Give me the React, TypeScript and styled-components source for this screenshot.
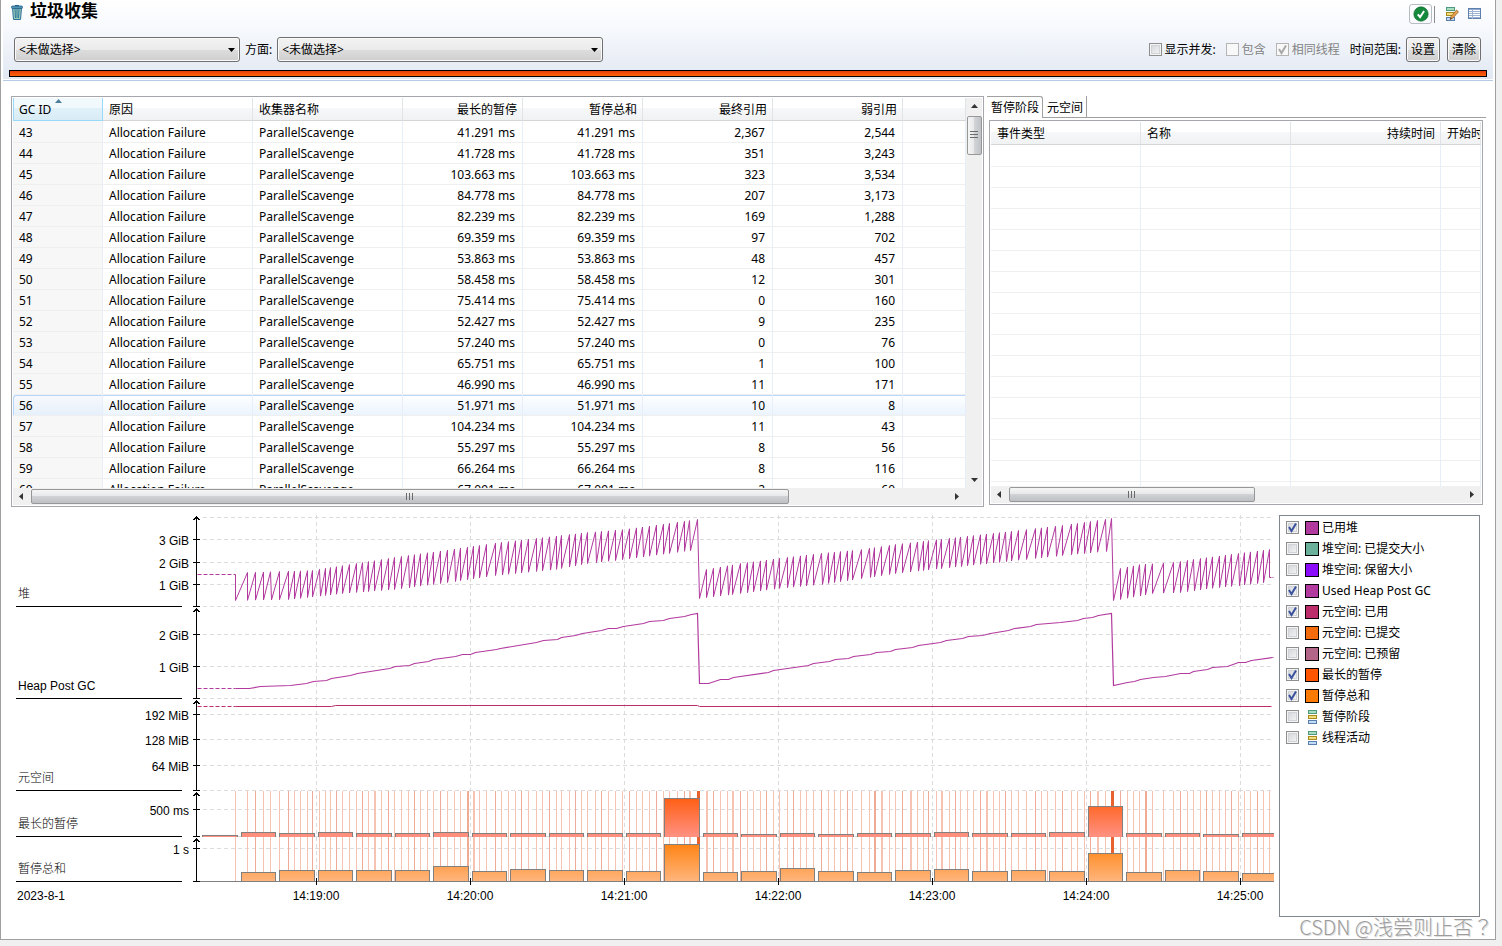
import React from "react";
import styled, { createGlobalStyle, css } from "styled-components";

const GlobalStyle = createGlobalStyle`
  * { box-sizing: border-box; }
  body {
    margin: 0;
    background: #f0f0f0;
    color: #000;
    font: 12px/16px "Noto Sans", "Noto Sans CJK SC", sans-serif;
  }
  button, select, input { font: inherit; color: inherit; margin: 0; }
`;

const Editor = styled.main`
  position: relative;
  margin: 0 6px 6px 0;
  border: 1px solid #a0a0a0;
  border-top: 0;
  background: #fff;
`;

const Header = styled.header`
  margin: 0 2px;
  border-bottom: 1px solid #b5cae6;
  padding-bottom: 1px;
`;

const HeaderBody = styled.div`
  background: linear-gradient(#ffffff, #f7f9fd 35%, #e1e8f2);
  padding-bottom: 2px;
`;

const TitleRow = styled.div`
  display: flex;
  align-items: center;
  height: 24px;
  padding: 0 10px 0 8px;
  gap: 7px;
`;

const Title = styled.h1`
  margin: 0;
  flex: 1;
  font-size: 17px;
  line-height: 22px;
  padding-bottom: 2px;
  font-weight: 700;
`;

const ToolButton = styled.button<{ $raised?: boolean }>`
  display: grid;
  place-items: center;
  width: ${(p) => (p.$raised ? 23 : 16)}px;
  height: 20px;
  padding: 0;
  background: none;
  border: ${(p) => (p.$raised ? "1px solid #b9bcc2" : "0")};
  border-radius: 3px;
`;

const ToolSeparator = styled.span`
  width: 1px;
  height: 17px;
  background: #8d8d8d;
`;

const ToolBar = styled.div`
  display: flex;
  align-items: center;
  padding-top: 4px;
  gap: 2px;
  ${ToolSeparator} { margin-right: 7px; }
  ${ToolButton}:last-child { margin-left: 5px; }
`;

const ControlRow = styled.div`
  display: flex;
  align-items: center;
  padding: 13px 12px 8px 11px;
  gap: 5px;
`;

const SelectBox = styled.span<{ $width: number }>`
  display: grid;
  align-items: center;
  width: ${(p) => p.$width}px;
  > * { grid-area: 1 / 1; }
  > svg { justify-self: end; margin-right: 5px; pointer-events: none; }
`;

const raised = css`
  height: 25px;
  border: 1px solid #707070;
  border-radius: 3px;
  background: linear-gradient(#f2f2f2, #ebebeb 50%, #dddddd 50%, #cfcfcf);
  box-shadow: inset 0 0 0 1px #fafafa;
`;

const Select = styled.select`
  ${raised}
  appearance: none;
  width: 100%;
  padding: 0 4px;
`;

const PushButton = styled.button`
  ${raised}
  width: 34px;
  padding: 0;
  & + & { margin-left: 2px; }
`;

const Spacer = styled.span`
  flex: 1;
`;

const TickLabel = styled.label<{ $disabled?: boolean }>`
  display: flex;
  align-items: center;
  gap: 3px;
  margin-right: 5px;
  color: ${(p) => (p.$disabled ? "#838383" : "#000")};
`;

const TickBox = styled.span`
  display: grid;
  width: 13px;
  height: 13px;
  > * { grid-area: 1 / 1; }
  > svg { pointer-events: none; }
`;

const TickInput = styled.input`
  appearance: none;
  width: 13px;
  height: 13px;
  border: 1px solid #8e8f8f;
  background: linear-gradient(135deg, #cfd2d6, #f8f8f8);
  box-shadow: inset 0 0 0 1px #f4f4f4, inset 0 0 0 2px #d0d3d8;
  &:disabled {
    border-color: #b5b5b5;
    background: #f8f8f8;
    box-shadow: none;
  }
`;

const RecordingBar = styled.div`
  height: 7px;
  margin: 0 6px;
  border: 1px solid #000;
  background: linear-gradient(#e63c08, #fb6408);
`;

const TablesRow = styled.div`
  display: grid;
  grid-template-columns: minmax(0, 973fr) minmax(0, 499fr);
  column-gap: 3px;
  padding: 15px 9px 0 10px;
`;

const TableFrame = styled.div<{ $height: number; $vertical?: boolean }>`
  display: grid;
  grid-template-columns: minmax(0, 1fr) ${(p) => (p.$vertical ? "16px" : "")};
  grid-template-rows: minmax(0, 1fr) 17px;
  height: ${(p) => p.$height}px;
  padding: 1px;
  border: 1px solid #a5a7ac;
`;

const Viewport = styled.div`
  overflow: hidden;
`;

const Table = styled.table`
  width: 100%;
  table-layout: fixed;
  border-collapse: separate;
  border-spacing: 0;
`;

const Th = styled.th<{ $right?: boolean; $sorted?: boolean }>`
  position: relative;
  height: 23px;
  padding: 2px 5px 0 6px;
  border-right: 1px solid #e0e3e8;
  border-bottom: 1px solid #d5d5d5;
  background: linear-gradient(#ffffff 45%, #f7f8fa 45%, #f1f2f4);
  font-weight: 400;
  white-space: nowrap;
  overflow: hidden;
  text-align: ${(p) => (p.$right ? "right" : "left")};
  ${(p) => p.$sorted && css`
    border-color: #96d9f9;
    border-left: 1px solid #96d9f9;
    padding-left: 5px;
    background: linear-gradient(#f2f9fc 45%, #e1f1f9 45%, #d8ecf6);
  `}
  > svg { position: absolute; top: 1px; left: 41px; }
`;

const Td = styled.td<{ $right?: boolean; $sorted?: boolean }>`
  height: 21px;
  padding: 2px 7px 0 6px;
  border-right: 1px solid #e6eef9;
  border-bottom: 1px solid #efefef;
  white-space: nowrap;
  line-height: 18px;
  text-align: ${(p) => (p.$right ? "right" : "left")};
  background: ${(p) => (p.$sorted ? "#f7f7f7" : "transparent")};
`;

const Tr = styled.tr<{ $hot?: boolean }>`
  &:first-child > td { height: 22px; padding-top: 3px; }
  ${(p) => p.$hot && css`
    > td {
      background: linear-gradient(#ffffff, #ebf4fe);
      box-shadow: inset 0 1px #b8d6fb;
    }
    > td:first-child {
      background: linear-gradient(#f7f9fc, #e6f0fb);
      border-top-left-radius: 3px;
      box-shadow: inset 1px 1px #b8d6fb;
    }
  `}
`;

const HBar = styled.div`
  display: flex;
  align-items: center;
  background: #f0f0f0;
`;

const VBar = styled.div`
  display: flex;
  flex-direction: column;
  align-items: center;
  gap: 1px;
  background: #f0f0f0;
`;

const Corner = styled.div`
  background: #f0f0f0;
`;

const ScrollArrow = styled.button`
  display: grid;
  place-items: center;
  width: 18px;
  height: 17px;
  padding: 0;
  border: 0;
  background: none;
`;

const Thumb = styled.div<{ $share: number; $vertical?: boolean }>`
  display: grid;
  place-items: center;
  flex: ${(p) => p.$share} 0 0;
  border: 1px solid #979797;
  border-radius: 2px;
  ${(p) => p.$vertical
    ? css`width: 15px; background: linear-gradient(90deg, #f5f5f5, #e6e7e9 50%, #d2d4d7 50%, #bfc2c6);`
    : css`height: 15px; background: linear-gradient(#f5f5f5, #e6e7e9 50%, #d0d2d5 50%, #bdc0c4);`}
`;

const Track = styled.div<{ $share: number }>`
  flex: ${(p) => p.$share} 0 0;
`;

const Side = styled.section`
  > ${TableFrame} { margin: 2px 3px 0 2px; }
`;

const Tabs = styled.div`
  display: flex;
  height: 22px;
`;

const Tab = styled.button<{ $active?: boolean }>`
  padding: 1px 3px 0 4px;
  background: #fff;
  border: 0 solid #a0a0a0;
  border-right-width: 1px;
  ${(p) => (p.$active
    ? css`border-top-width: 1px; border-top-right-radius: 3px;`
    : css`border-bottom-width: 1px; padding-top: 2px;`)}
`;

const TabRest = styled.div`
  flex: 1;
  border-bottom: 1px solid #a0a0a0;
`;

const ChartRow = styled.div`
  display: flex;
  padding: 8px 15px 22px 0;
`;

const Chart = styled.svg`
  flex: 1;
  min-width: 0;
  height: 402px;
  font: 12px "Liberation Sans", "Noto Sans CJK SC", sans-serif;
`;

const Legend = styled.ul`
  width: 201px;
  margin: 0;
  padding: 1px 6px;
  list-style: none;
  border: 1px solid #82868f;
`;

const LegendRow = styled.label`
  display: flex;
  align-items: center;
  height: 21px;
`;

const Swatch = styled.span<{ $color: string }>`
  width: 14px;
  height: 14px;
  margin: 0 3px 0 6px;
  border: 1px solid #000;
  background: ${(p) => p.$color};
`;

const LaneMark = styled.span`
  display: grid;
  width: 14px;
  margin: 0 3px 0 6px;
  justify-items: center;
`;

const Watermark = styled.div`
  position: absolute;
  right: 2px;
  bottom: 0;
  color: #9c9c9c;
  font: 20px/24px "Noto Sans CJK TC", sans-serif;
  font-weight: 300;
  text-shadow: 1px 1px #dedede;
`;

function Tick({ label, checked, disabled }: { label?: string; checked?: boolean; disabled?: boolean }) {
  return (
    <TickBox>
      <TickInput type="checkbox" defaultChecked={checked} disabled={disabled} aria-label={label} />
      {checked && (
        <svg width="13" height="13" viewBox="0 0 13 13">
          <path d="M3 6l2.5 4L10 2.5" fill="none" stroke={disabled ? "#a8a8a8" : "#3a519c"} strokeWidth="2" />
        </svg>
      )}
    </TickBox>
  );
}

function Drop({ width, label }: { width: number; label: string }) {
  return (
    <SelectBox $width={width}>
      <Select aria-label={label}><option>&lt;未做选择&gt;</option></Select>
      <svg width="7" height="4" viewBox="0 0 7 4"><path d="M0 0h7L3.500 4z" /></svg>
    </SelectBox>
  );
}

const arrows = {
  left: "M5 1v7L1 4.500z",
  right: "M2 1v7l4-3.500z",
  up: "M1 6h7L4.500 2z",
  down: "M1 3h7L4.500 7z",
};

function Arrow({ dir }: { dir: keyof typeof arrows }) {
  return (
    <ScrollArrow aria-label={dir}>
      <svg width="9" height="9" viewBox="0 0 9 9"><path d={arrows[dir]} fill="#333" /></svg>
    </ScrollArrow>
  );
}

function Grip({ vertical }: { vertical?: boolean }) {
  return (
    <svg width="8" height="8" viewBox="0 0 8 8" shapeRendering="crispEdges">
      <path d={vertical ? "M0 0h8M0 3h8M0 6h8" : "M0 0v7M3 0v7M6 0v7"} stroke="#6a6a6a" transform={vertical ? "translate(0 .5)" : "translate(.5 0)"} />
    </svg>
  );
}

function HScroll({ thumb, rest }: { thumb: number; rest: number }) {
  return (
    <HBar>
      <Arrow dir="left" />
      <Thumb $share={thumb}><Grip /></Thumb>
      <Track $share={rest} />
      <Arrow dir="right" />
    </HBar>
  );
}

function Lanes() {
  return (
    <g shapeRendering="crispEdges">
      {[["#4f9a7c", "#a9dcc0"], ["#a98a1e", "#f2dd7c"], ["#5a7fae", "#c3dcf5"]].map(([s, f], i) => (
        <rect key={s} x=".5" y={i * 5 + 0.5} width="8" height="3" rx="1" stroke={s} fill={f} />
      ))}
    </g>
  );
}

const gcRows: [number, string, string, string, string][] = [
  [43, "41.291", "41.291", "2,367", "2,544"],
  [44, "41.728", "41.728", "351", "3,243"],
  [45, "103.663", "103.663", "323", "3,534"],
  [46, "84.778", "84.778", "207", "3,173"],
  [47, "82.239", "82.239", "169", "1,288"],
  [48, "69.359", "69.359", "97", "702"],
  [49, "53.863", "53.863", "48", "457"],
  [50, "58.458", "58.458", "12", "301"],
  [51, "75.414", "75.414", "0", "160"],
  [52, "52.427", "52.427", "9", "235"],
  [53, "57.240", "57.240", "0", "76"],
  [54, "65.751", "65.751", "1", "100"],
  [55, "46.990", "46.990", "11", "171"],
  [56, "51.971", "51.971", "10", "8"],
  [57, "104.234", "104.234", "11", "43"],
  [58, "55.297", "55.297", "8", "56"],
  [59, "66.264", "66.264", "8", "116"],
  [60, "67.091", "67.091", "2", "60"],
];

function GcTable() {
  return (
    <TableFrame $height={411} $vertical>
      <Viewport>
        <Table>
          <colgroup>
            {[90, 150, 150, 120, 120, 130, 130].map((w, i) => <col key={i} width={w} />)}
            <col />
          </colgroup>
          <thead>
            <tr>
              <Th $sorted>
                GC ID
                <svg width="7" height="4" viewBox="0 0 7 4"><path d="M0 4h7L3.500 0z" fill="#4d7f9c" /></svg>
              </Th>
              <Th>原因</Th>
              <Th>收集器名称</Th>
              <Th $right>最长的暂停</Th>
              <Th $right>暂停总和</Th>
              <Th $right>最终引用</Th>
              <Th $right>弱引用</Th>
              <Th />
            </tr>
          </thead>
          <tbody>
            {gcRows.map(([id, longest, sum, final, weak]) => (
              <Tr key={id} $hot={id === 56}>
                <Td $sorted>{id}</Td>
                <Td>Allocation Failure</Td>
                <Td>ParallelScavenge</Td>
                <Td $right>{longest} ms</Td>
                <Td $right>{sum} ms</Td>
                <Td $right>{final}</Td>
                <Td $right>{weak}</Td>
                <Td />
              </Tr>
            ))}
          </tbody>
        </Table>
      </Viewport>
      <VBar>
        <Arrow dir="up" />
        <Thumb $share={37} $vertical><Grip vertical /></Thumb>
        <Track $share={316} />
        <Arrow dir="down" />
      </VBar>
      <HScroll thumb={758} rest={159} />
      <Corner />
    </TableFrame>
  );
}

function PhasesPanel() {
  return (
    <Side>
      <Tabs role="tablist">
        <Tab role="tab" aria-selected $active>暂停阶段</Tab>
        <Tab role="tab" aria-selected={false}>元空间</Tab>
        <TabRest />
      </Tabs>
      <TableFrame $height={385}>
        <Viewport>
          <Table>
            <colgroup>
              <col width={150} /><col width={150} /><col width={150} /><col />
            </colgroup>
            <thead>
              <tr><Th>事件类型</Th><Th>名称</Th><Th $right>持续时间</Th><Th>开始时间</Th></tr>
            </thead>
            <tbody>
              {Array.from({ length: 17 }, (_, i) => (
                <Tr key={i}><Td /><Td /><Td /><Td /></Tr>
              ))}
            </tbody>
          </Table>
        </Viewport>
        <HScroll thumb={246} rest={209} />
      </TableFrame>
    </Side>
  );
}

/* Collection times, as x positions on the time axis, split by full collection. */
const cycles: number[][] = [
  [247, 255, 263, 270, 279, 288, 294, 300, 307, 312, 319, 325, 330, 336, 342, 349, 356, 362, 368, 374, 381, 388, 394,
    401, 408, 414, 420, 427, 433, 440, 447, 454, 460, 467, 473, 479, 486, 495, 501, 508, 515, 521, 528, 536, 542, 549,
    556, 561, 569, 575, 581, 587, 595, 601, 608, 615, 622, 629, 636, 642, 649, 656, 663, 669, 677, 684, 689, 697],
  [706, 713, 720, 727, 732, 740, 747, 753, 760, 766, 773, 779, 787, 793, 800, 806, 813, 821, 828, 834, 840, 847, 852,
    861, 869, 874, 881, 889, 895, 902, 910, 917, 923, 928, 936, 941, 949, 955, 960, 967, 973, 980, 986, 993, 999, 1005,
    1011, 1018, 1026, 1035, 1041, 1047, 1055, 1062, 1071, 1077, 1084, 1090, 1097, 1105, 1111],
  [1120, 1127, 1133, 1139, 1145, 1152, 1163, 1173, 1180, 1187, 1193, 1200, 1206, 1212, 1219, 1225, 1231, 1238, 1244,
    1250, 1257, 1263, 1269],
];

type Curve = [number, number][];
const peaks: Curve[] = [
  [[247, 572], [312, 570], [394, 557], [486, 544], [500, 542], [587, 532], [624, 529], [697, 519]],
  [[706, 569], [740, 563], [778, 558], [820, 553], [862, 549], [895, 544], [1062, 525], [1111, 518]],
  [[1120, 568], [1140, 564], [1173, 562], [1200, 558], [1230, 554], [1269, 549]],
];
const troughs: Curve[] = [
  [[235, 600], [290, 599], [307, 597], [342, 593], [394, 589], [440, 583], [495, 575], [555, 569], [587, 563], [624, 559], [690, 550]],
  [[699, 598], [740, 593], [778, 588], [820, 584], [862, 578], [895, 573], [1062, 555], [1105, 551]],
  [[1113, 600], [1120, 599], [1152, 593], [1180, 592], [1210, 588], [1240, 585], [1265, 582]],
];

function at(curve: Curve, x: number) {
  for (let i = 1; i < curve.length; i++) {
    const [x0, y0] = curve[i - 1];
    const [x1, y1] = curve[i];
    if (x <= x1) return y0 + ((x - x0) / (x1 - x0)) * (y1 - y0);
  }
  return curve[curve.length - 1][1];
}

const heapPoints = (() => {
  const out = ["235,574"];
  cycles.forEach((cycle, c) => {
    const start = troughs[c][0];
    out.push(`${start[0]},${start[1]}`);
    cycle.forEach((x, i) => {
      out.push(`${x},${at(peaks[c], x).toFixed(1)}`);
      if (i < cycle.length - 1) out.push(`${x + (i % 7 === 3 ? 1 : 0)},${at(troughs[c], x).toFixed(1)}`);
    });
  });
  out.push("1269,577", "1271,577");
  return out.join(" ");
})();

const postGcPoints =
  "235,688 249,688 260,686 290,685 306,683 313,681 326,680 331,678 350,675 357,673 389,668 395,666 409,665 414,663 428,661 433,659 455,656 462,654 470,654 475,652 496,649 500,648 536,642 543,640 557,639 561,637 575,635 582,633 601,630 608,628 616,628 623,626 643,623 649,621 663,620 669,618 684,616 691,614 697,613 699,683 708,683 720,679 728,679 733,677 768,672 773,670 808,665 813,663 829,661 835,659 848,658 853,656 870,654 876,652 890,651 895,649 912,647 918,645 940,642 946,640 962,638 968,636 982,635 990,633 1008,630 1014,628 1030,626 1036,624 1060,622 1077,620 1083,618 1092,617 1098,615 1111,613 1113,685 1127,682 1134,681 1140,679 1153,677 1165,676 1180,673 1189,673 1193,671 1207,669 1212,667 1227,666 1238,662 1245,662 1251,660 1272,657";

const wideMarks = [374, 461, 467, 473, 480, 689, 706, 732, 767, 780, 874, 881, 910, 941, 986, 1097, 1145];
const fullMarks = [697, 1111];

const longestTops = [835, 832, 833, 832, 833, 833, 832, 833, 833, 833, 833, 833, 798, 833, 834, 833, 834, 833, 833, 832, 833, 833, 832, 806, 833, 833, 834, 833];
const sumTops = [881, 872, 870, 870, 870, 870, 866, 871, 869, 870, 870, 871, 844, 872, 871, 868, 871, 872, 870, 869, 871, 870, 871, 853, 872, 870, 871, 873];

const lanes = [
  { name: "堆", top: 517, base: 606, ticks: [[539, "3 GiB"], [562, "2 GiB"], [584, "1 GiB"]] },
  { name: "Heap Post GC", top: 609, base: 698, ticks: [[634, "2 GiB"], [666, "1 GiB"]] },
  { name: "元空间", top: 701, base: 790, ticks: [[714, "192 MiB"], [739, "128 MiB"], [765, "64 MiB"]] },
  { name: "最长的暂停", top: 793, base: 836, ticks: [[809, "500 ms"]] },
  { name: "暂停总和", top: 839, base: 881, ticks: [[848, "1 s"]] },
] as { name: string; top: number; base: number; ticks: [number, string][] }[];

function Bars({ tops, base, fill }: { tops: number[]; base: number; fill: string }) {
  return (
    <>
      {tops.map((top, i) => {
        const x = Math.floor(202.5 + i * 38.5);
        const right = Math.min(Math.floor(238 + i * 38.5), 1274);
        return (
          <g key={i}>
            <rect x={x} y={top} width={right - x} height={base - top} fill={fill} />
            <path d={`M${x + 0.5} ${base}V${top + 0.5}H${right - 0.5}${right < 1274 ? `V${base}` : ""}`} fill="none" stroke="#808080" />
          </g>
        );
      })}
    </>
  );
}

function TimeChart() {
  const marks = cycles.flat();
  return (
    <Chart viewBox="1 515 1278 402" preserveAspectRatio="xMinYMin meet" role="img" aria-label="垃圾收集">
      <defs>
        <linearGradient id="longest" gradientUnits="userSpaceOnUse" x1="0" x2="0" y1="791" y2="836">
          <stop offset="0" stopColor="#ff5500" /><stop offset="1" stopColor="#ff9080" />
        </linearGradient>
        <linearGradient id="sum" gradientUnits="userSpaceOnUse" x1="0" x2="0" y1="837" y2="881">
          <stop offset="0" stopColor="#ff7a00" /><stop offset="1" stopColor="#ffb57c" />
        </linearGradient>
      </defs>
      <g shapeRendering="crispEdges">
        <g stroke="#dcdcdc" strokeDasharray="4 3" fill="none">
          {[517, 539, 562, 584, 606, 634, 666, 698, 714, 739, 765, 790, 809, 836, 848].map((y) => (
            <path key={y} d={`M203 ${y + 0.5}H1273`} />
          ))}
          {Array.from({ length: 7 }, (_, i) => <path key={i} d={`M${316.5 + i * 154} 515V881`} />)}
        </g>
        <rect x="235" y="791" width="1" height="90" fill="#f6c3b3" />
        {marks.map((x, i) => (
          <rect key={x} x={x} y="791" width={wideMarks.includes(x) ? 2 : 1} height="90" fill={i % 4 === 1 ? "#efab95" : "#f6c3b3"} />
        ))}
        {fullMarks.map((x) => <rect key={x} x={x} y="791" width="3" height="90" fill="#e8622f" />)}
        <Bars tops={longestTops} base={837} fill="url(#longest)" />
        <Bars tops={sumTops} base={881} fill="url(#sum)" />
        <path d="M197 881.500H1274" stroke="#808080" />
        <g stroke="#000" fill="none">
          {lanes.map((lane) => (
            <g key={lane.name}>
              <path d={`M16 ${lane.base + 0.5}H182M193 ${lane.base + 0.5}H200`} />
              <path d={`M196.500 ${lane.top - 1}V${lane.base + 1}M193 ${lane.top + 2.5}H195M194 ${lane.top + 1.5}H199M195 ${lane.top + 0.5}H198M198 ${lane.top + 2.5}H200`} />
              {lane.ticks.map(([y]) => <path key={y} d={`M193 ${y + 0.5}H200`} />)}
            </g>
          ))}
          {Array.from({ length: 7 }, (_, i) => <path key={i} d={`M${316.5 + i * 154} 878V885`} />)}
        </g>
      </g>
      <g fill="none" strokeWidth="1" transform="translate(.5 .5)">
        <g stroke="#b23a9e">
          <path d="M197 574H235M197 688H235" strokeDasharray="4 2" />
          <polyline points={heapPoints} />
          <polyline points={postGcPoints} strokeWidth="1.2" />
          <path d="M1272 577h1M1272 657h1" />
        </g>
        <g stroke="#bd2d6c">
          <path d="M197 706H235" strokeDasharray="4 2" />
          <path d="M235 706H331L335 705H697L699 706H1271" />
        </g>
      </g>
      {lanes.map((lane) => (
        <g key={lane.name}>
          <text x="18" y={lane.base - 8} fontWeight={lane.name === "Heap Post GC" ? 400 : 300}>
            {lane.name}
          </text>
          {lane.ticks.map(([y, label]) => <text key={label} x="189" y={y + 6} textAnchor="end">{label}</text>)}
        </g>
      ))}
      <text x="17" y="900">2023-8-1</text>
      {Array.from({ length: 7 }, (_, i) => (
        <text key={i} x={316 + i * 154} y="900" textAnchor="middle">{`14:${19 + i}:00`}</text>
      ))}
    </Chart>
  );
}

const legend: { name: string; on?: boolean; color?: string }[] = [
  { name: "已用堆", on: true, color: "#b23a9e" },
  { name: "堆空间: 已提交大小", color: "#6bb09b" },
  { name: "堆空间: 保留大小", color: "#8a0cfa" },
  { name: "Used Heap Post GC", on: true, color: "#b23a9e" },
  { name: "元空间: 已用", on: true, color: "#bd2d6c" },
  { name: "元空间: 已提交", color: "#f26c0d" },
  { name: "元空间: 已预留", color: "#b36688" },
  { name: "最长的暂停", on: true, color: "#ff5500" },
  { name: "暂停总和", on: true, color: "#ff7a00" },
  { name: "暂停阶段" },
  { name: "线程活动" },
];

export default function App() {
  return (
    <>
      <GlobalStyle />
      <Editor>
        <Header>
          <HeaderBody>
            <TitleRow>
              <svg width="12" height="16" viewBox="0 0 12 16">
                <path d="M1.500 4h9l-1 11.500h-7z" fill="#9cc9b4" stroke="#2b6f9b" />
                <path d="M4 5l.5 9M6 5v9M8 5l-.5 9" stroke="#2f789f" fill="none" />
                <rect x=".5" y="2" width="11" height="2.500" rx="1" fill="#4f93b5" stroke="#235f88" strokeWidth=".8" />
                <path d="M4 1.500h4" stroke="#235f88" />
              </svg>
              <Title>垃圾收集</Title>
              <ToolBar>
                <ToolButton $raised aria-label="规则结果">
                  <svg width="16" height="16" viewBox="0 0 16 16">
                    <circle cx="8" cy="8" r="7.200" fill="#15893c" stroke="#0d5f2a" strokeWidth=".6" />
                    <path d="M4.800 8.300l2.300 2.700 4-6" fill="none" stroke="#fff" strokeWidth="2" />
                  </svg>
                </ToolButton>
                <ToolSeparator />
                <ToolButton aria-label="编辑">
                  <svg width="13" height="15" viewBox="0 0 13 15">
                    <Lanes />
                    <path d="M4 12.500l1-3L10.500 3l2 1.800L7 11z" fill="#e8a24c" stroke="#8a5a22" strokeWidth=".7" />
                    <path d="M4 12.500l.7-2 1.300 1z" fill="#333" />
                  </svg>
                </ToolButton>
                <ToolButton aria-label="表格">
                  <svg width="14" height="12" viewBox="0 0 14 12" shapeRendering="crispEdges">
                    <rect x=".5" y=".5" width="12" height="10" fill="#fff" stroke="#5f7fae" />
                    <path d="M1 1.500h11" stroke="#8fa9d0" />
                    <path d="M1 3.500h11M1 5.500h11M1 7.500h11M1 9.500h11M4.500 2v9" stroke="#9db3d3" />
                  </svg>
                </ToolButton>
              </ToolBar>
            </TitleRow>
            <ControlRow>
              <Drop width={226} label="选择" />
              <span>方面:</span>
              <Drop width={326} label="方面" />
              <Spacer />
              <TickLabel><Tick />显示并发:</TickLabel>
              <TickLabel $disabled><Tick disabled />包含</TickLabel>
              <TickLabel $disabled><Tick checked disabled />相同线程</TickLabel>
              <span>时间范围:</span>
              <PushButton>设置</PushButton>
              <PushButton>清除</PushButton>
            </ControlRow>
            <RecordingBar />
          </HeaderBody>
        </Header>
        <TablesRow>
          <GcTable />
          <PhasesPanel />
        </TablesRow>
        <ChartRow>
          <TimeChart />
          <Legend>
            {legend.map((item) => (
              <li key={item.name}>
                <LegendRow>
                  <Tick checked={item.on} />
                  {item.color ? <Swatch $color={item.color} /> : (
                    <LaneMark><svg width="9" height="14" viewBox="0 0 9 14"><Lanes /></svg></LaneMark>
                  )}
                  {item.name}
                </LegendRow>
              </li>
            ))}
          </Legend>
        </ChartRow>
        <Watermark>CSDN @浅尝则止否？</Watermark>
      </Editor>
    </>
  );
}
